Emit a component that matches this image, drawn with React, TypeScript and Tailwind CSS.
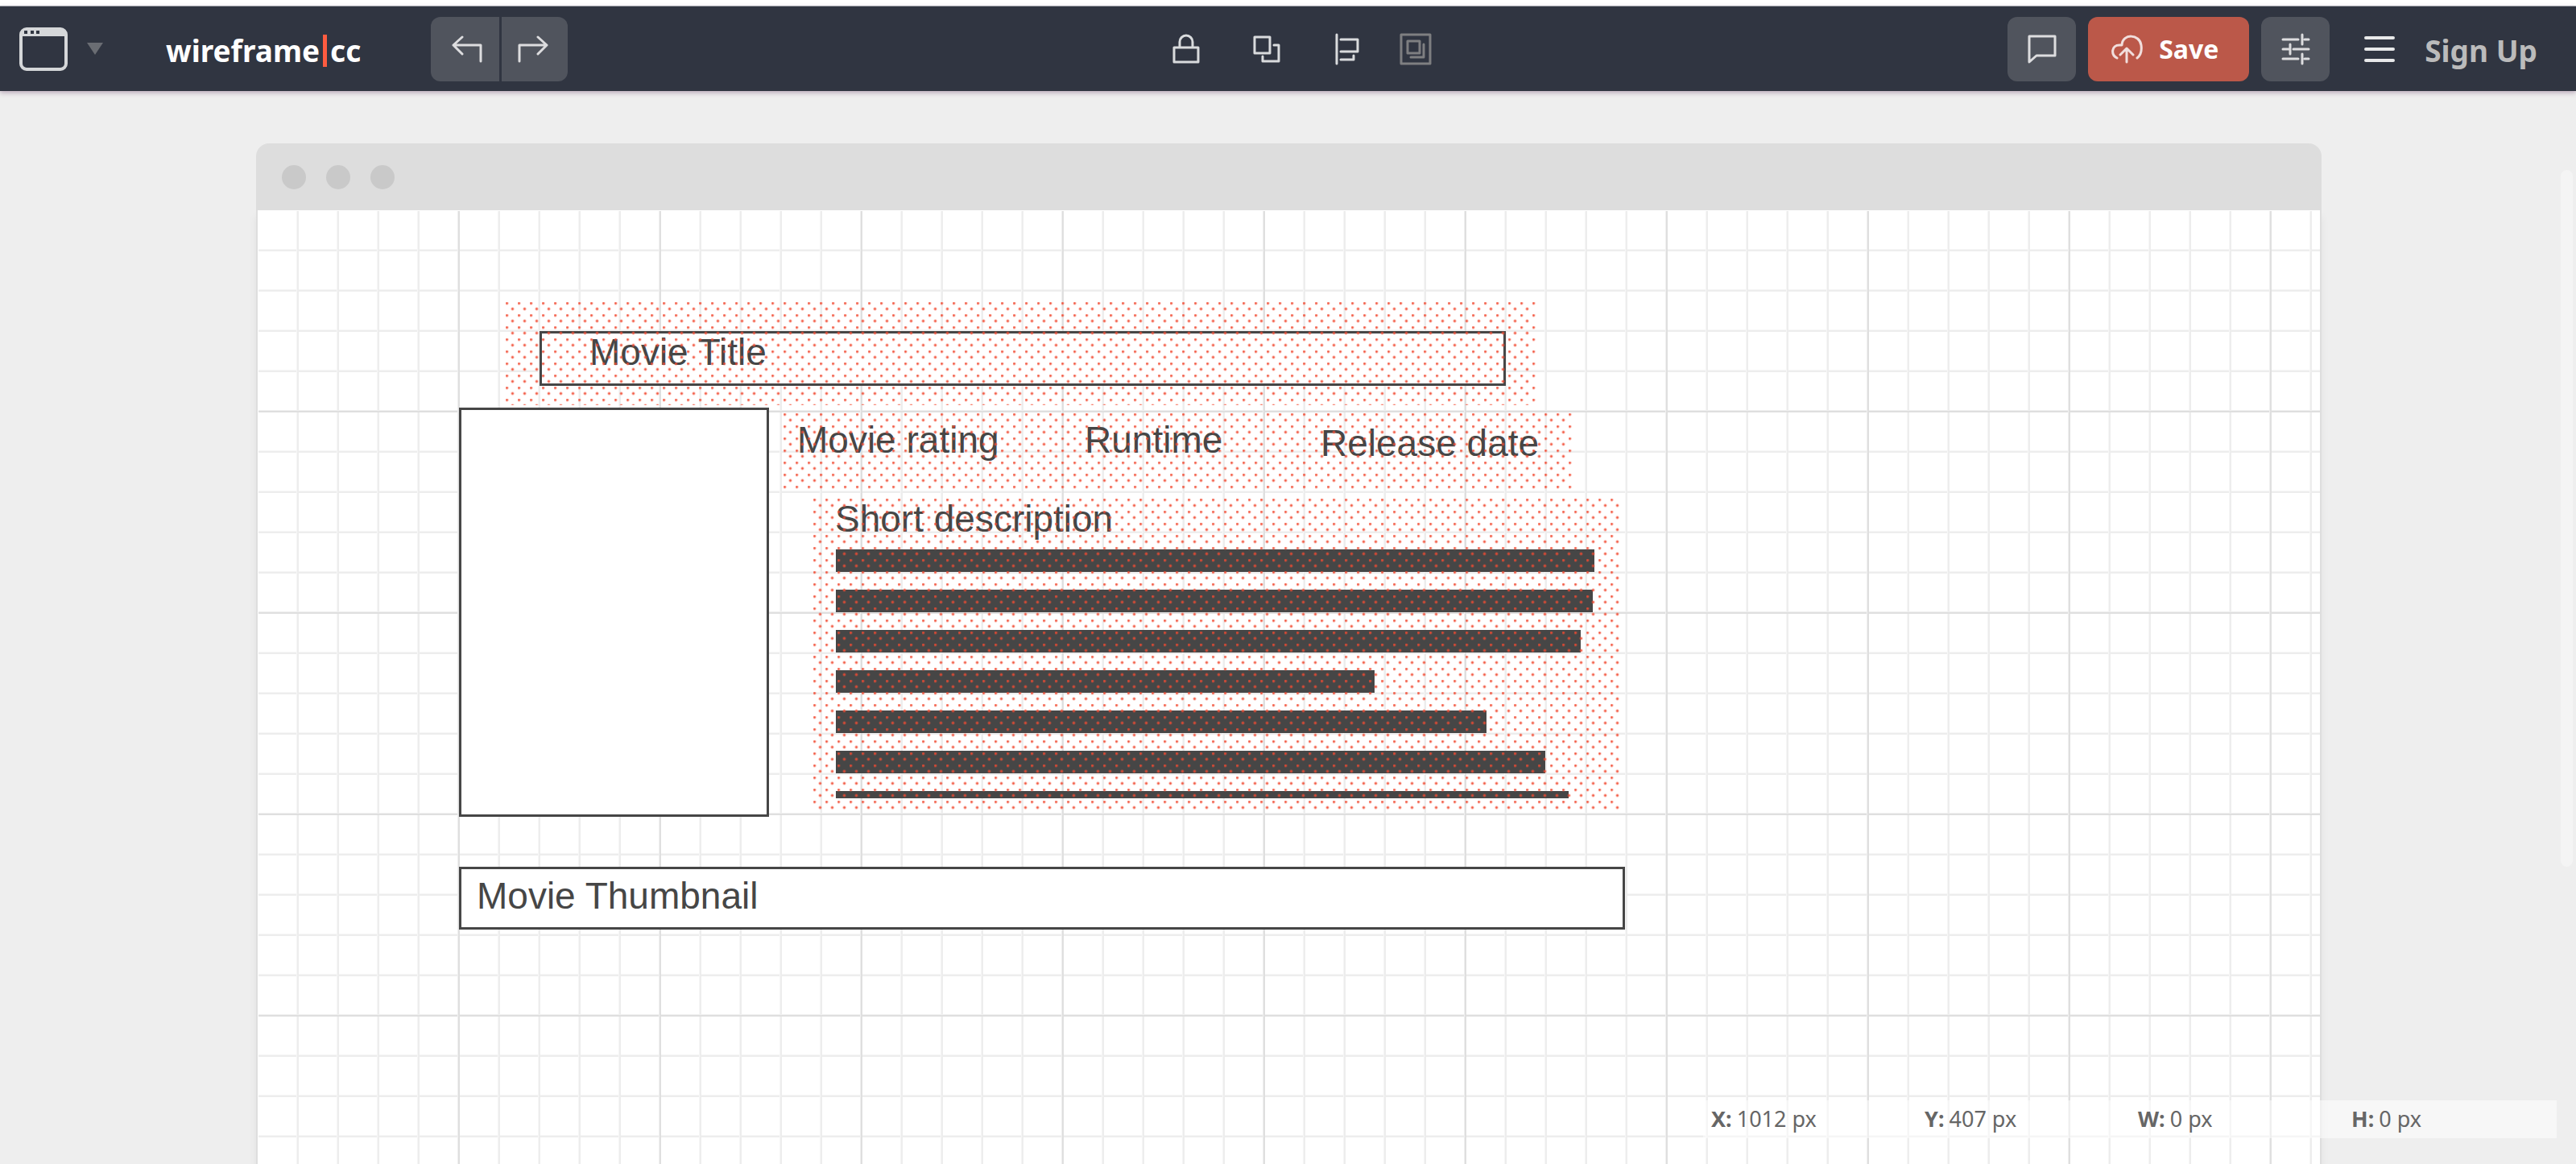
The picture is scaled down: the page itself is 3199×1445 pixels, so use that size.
import type { ReactNode } from "react";

function Icon({ children, className, w, h, sw = 3 }: { children: ReactNode; className?: string; w: number; h: number; sw?: number }) {
  return (
    <svg
      width={w}
      height={h}
      viewBox={`0 0 ${w} ${h}`}
      fill="none"
      stroke="currentColor"
      strokeWidth={sw}
      strokeLinecap="round"
      strokeLinejoin="round"
      className={className}
      aria-hidden="true"
    >
      {children}
    </svg>
  );
}

const tool = "flex h-20 items-center justify-center bg-[#50545d] text-[#dddddf]";

function Header() {
  return (
    <header className="relative z-10 mt-2 grid h-[105px] grid-cols-[1fr_auto_1fr] items-center bg-[#303541] shadow-[0_-1px_0_#a9abb2,0_2px_6px_rgba(80,30,80,0.35)]">
      <div className="flex items-center">
        <button aria-label="Canvas type" className="ml-6 flex items-center gap-6">
          <svg width="60" height="54" viewBox="0 0 60 54" aria-hidden="true">
            <rect x="2" y="2" width="56" height="50" rx="7" fill="none" stroke="#d5d7d9" strokeWidth="4" />
            <path d="M2 11V8a6 6 0 0 1 6-6h44a6 6 0 0 1 6 6v3z" fill="#d5d7d9" />
            <path d="M6 4h4v4H6zM14 4h4v4h-4zM21 4h4v4h-4z" fill="#303541" />
          </svg>
          <svg width="20" height="15" viewBox="0 0 20 15" aria-hidden="true">
            <path d="M0 0h20L10 15z" fill="#6a6d73" />
          </svg>
        </button>
        <a href="#" className="ml-[78px] flex items-center pt-1 text-[37px] leading-[54px] font-bold text-white">
          wireframe<span className="mx-1 h-10 w-[5px] bg-[#ff5c40]" />cc
        </a>
        <div className="ml-[87px] flex gap-[3px] overflow-hidden rounded-xl">
          <button aria-label="Undo" className={`${tool} w-[85px] pl-1`}>
            <Icon w={38} h={34}><path d="M13 2L2 12L13 23M2 12H36V32" /></Icon>
          </button>
          <button aria-label="Redo" className={`${tool} w-[82px] pr-1`}>
            <Icon w={38} h={34}><path d="M25 2L36 12L25 23M36 12H2V32" /></Icon>
          </button>
        </div>
      </div>
      <div className="ml-4 flex items-center text-[#d9dbdd]">
        <button aria-label="Lock" className="flex w-[100px] justify-center">
          <Icon w={36} h={38}><path d="M3 17H33V35H3zM10 17V10a8 8 0 0 1 16 0V17" /></Icon>
        </button>
        <button aria-label="Bring forward" className="flex w-[100px] justify-center">
          <Icon w={36} h={36}><path d="M3 3H22V23H3zM27 13H33V33H13V27" /></Icon>
        </button>
        <button aria-label="Align" className="flex w-[100px] justify-center">
          <Icon w={32} h={40}><path d="M3 2V38M8 8H29V23H8M8 33H24V28" /></Icon>
        </button>
        <button aria-label="Group" className="flex w-[70px] justify-center text-[#7e7f81]">
          <Icon w={40} h={40}><path d="M2 2H38V38H2zM10 10H25V25H10zM30 14V30H14" /></Icon>
        </button>
      </div>
      <div className="flex items-center justify-end">
        <button aria-label="Comments" className={`${tool} w-[85px] rounded-xl`}>
          <Icon w={36} h={36}><path d="M2 2H34V26H11L2 34z" /></Icon>
        </button>
        <button className="ml-[15px] flex h-20 w-[200px] items-center rounded-xl bg-[#bb5849] pl-7 text-[32px] font-bold text-white">
          <Icon w={40} h={36} className="mr-5 text-[#f1dedc]">
            <path d="M8 29C0 25 1 13 11 13L14 13C15 -2 36 -1 38 13C39 20 37 26 33 29M20 34V18M12 25L20 17L28 25" />
          </Icon>
          Save
        </button>
        <button aria-label="Settings" className={`${tool} ml-[15px] w-[85px] rounded-xl`}>
          <Icon w={36} h={40}><path d="M2 8H21M26 2V14M29 8H34M2 20H9M11 14V26M15 20H34M2 32H21M26 26V38M29 32H34" /></Icon>
        </button>
        <button aria-label="Menu" className="ml-[42px] text-[#e8e9ea]">
          <Icon w={40} h={34} sw={4}><path d="M3 3H37M3 17H37M3 31H37" /></Icon>
        </button>
        <a href="#" className="mr-12 ml-9 pt-1 text-[37px] leading-[54px] font-bold text-[#bbbbbb]">Sign Up</a>
      </div>
    </header>
  );
}

const lines = [942, 940, 925, 669, 808, 881, 910];

const dots =
  "absolute bg-[radial-gradient(circle_at_1.5px_1.5px,rgba(240,72,48,0.9)_0.7px,rgba(245,80,55,0.4)_1.6px,transparent_2.6px),radial-gradient(circle_at_8.5px_8.5px,rgba(240,72,48,0.9)_0.7px,rgba(245,80,55,0.4)_1.6px,transparent_2.6px)] bg-[size:15px_15px]";
const label = "absolute font-['Liberation_Sans',sans-serif] text-[46px] leading-[52px] whitespace-nowrap";

function Canvas() {
  return (
    <section className="relative ml-[318px] mr-[316px] pt-[65px]">
      <div className="flex h-[83px] items-center gap-[25px] rounded-t-2xl bg-[#dddddd] pl-8">
        <span className="size-[30px] rounded-full bg-[#c9c9c9]" />
        <span className="size-[30px] rounded-full bg-[#c9c9c9]" />
        <span className="size-[30px] rounded-full bg-[#c9c9c9]" />
      </div>
      <div className="border-x-2 border-[#dedede] bg-white pt-px pl-px shadow-[0_8px_10px_rgba(0,0,0,0.06)]">
        <div className="relative h-[1183px] overflow-hidden bg-[linear-gradient(to_right,#f0f0f0_1px,#dfdfdf_1px,#dfdfdf_3px,transparent_3px),linear-gradient(to_bottom,#f0f0f0_1px,#dfdfdf_1px,#dfdfdf_3px,transparent_3px),linear-gradient(to_right,#f6f6f6_1px,#ededed_1px,#ededed_3px,transparent_3px),linear-gradient(to_bottom,#f6f6f6_1px,#ededed_1px,#ededed_3px,transparent_3px)] bg-[size:250px_250px,250px_250px,50px_50px,50px_50px] bg-[position:247px_247px,247px_247px,47px_47px,47px_47px] text-[#464646]">
          <div className="absolute top-[149px] left-[349px] h-[68px] w-[1200px] border-3 border-[#464646] bg-white" />
          <span className={`${label} top-[149px] left-[411px]`}>Movie Title</span>
          <div className="absolute top-[244px] left-[249px] h-[508px] w-[385px] border-3 border-[#464646] bg-white" />
          <span className={`${label} top-[258px] left-[669px]`}>Movie rating</span>
          <span className={`${label} top-[258px] left-[1026px]`}>Runtime</span>
          <span className={`${label} top-[262px] left-[1319px]`}>Release date</span>
          <span className={`${label} top-[356px] left-[716px]`}>Short description</span>
          <div className="absolute top-[420px] left-[717px] flex h-[309px] flex-col gap-[22px] overflow-hidden">
            {lines.map((w, i) => (
              <div key={i} className="h-7 shrink-0 bg-[#464646]" style={{ width: w }} />
            ))}
          </div>
          <div className="absolute top-[814px] left-[249px] h-[78px] w-[1448px] border-3 border-[#464646] bg-white" />
          <span className={`${label} top-[824px] left-[271px]`}>Movie Thumbnail</span>
          <div className={`${dots} top-[113px] left-[307px] h-[128px] w-[1281px]`} />
          <div className={`${dots} top-[251px] left-[652px] h-[96px] w-[979px]`} />
          <div className={`${dots} top-[357px] left-[689px] h-[390px] w-[1001px]`} />
        </div>
      </div>
    </section>
  );
}

const readout = [
  ["X:", "1012 px"],
  ["Y:", "407 px"],
  ["W:", "0 px"],
  ["H:", "0 px"],
];

export default function App() {
  return (
    <div className="relative h-screen overflow-hidden bg-[#eeeeee] font-['Noto_Sans',sans-serif]">
      <div className="absolute inset-x-0 top-0 h-2 bg-white" />
      <div className="flow-root">
        <Header />
        <Canvas />
      </div>
      <div className="absolute top-[211px] right-1 h-[865px] w-[15px] rounded-full bg-[#f4f4f4]" />
      <dl className="absolute right-6 bottom-8 grid h-[47px] w-[1060px] grid-cols-4 items-center bg-white/50 text-[27px] text-[#666666]">
        {readout.map(([k, v]) => (
          <div key={k} className="flex gap-1.5 pl-[10px]">
            <dt className="font-bold">{k}</dt>
            <dd>{v}</dd>
          </div>
        ))}
      </dl>
    </div>
  );
}
